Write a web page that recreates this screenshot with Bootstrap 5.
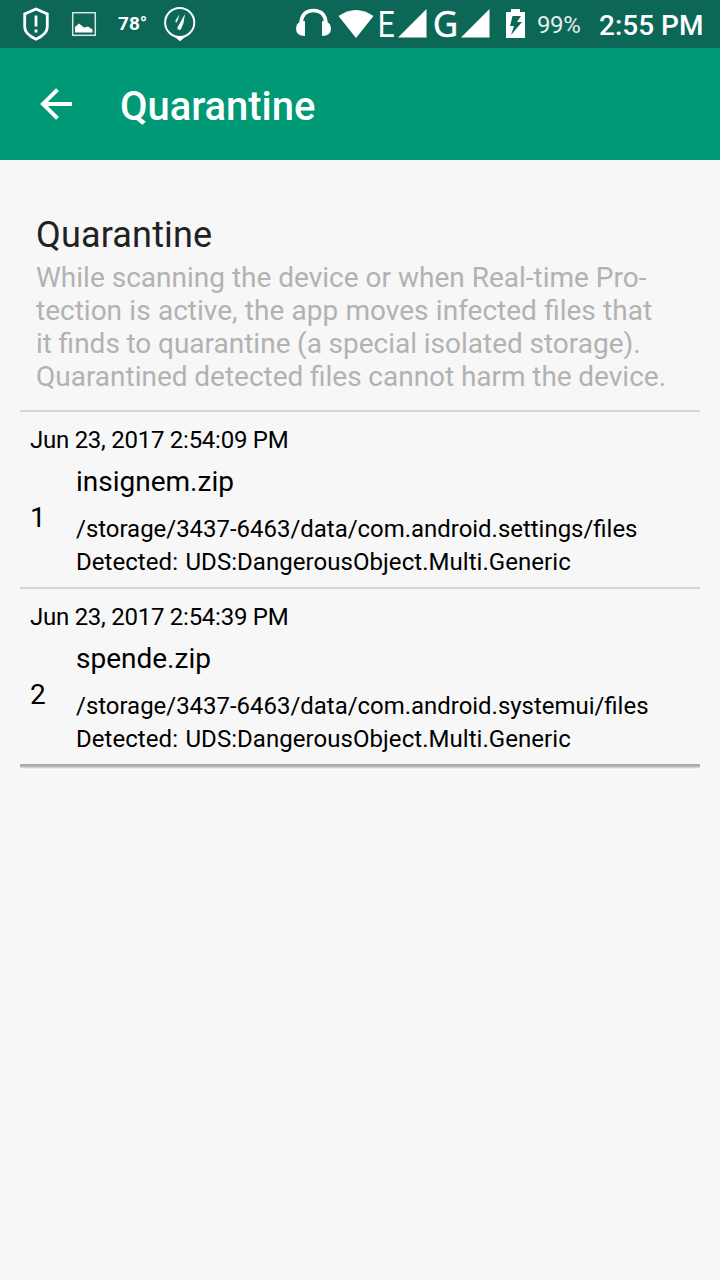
<!DOCTYPE html>
<html lang="en">
<head>
<meta charset="utf-8">
<meta name="viewport" content="width=device-width, initial-scale=1">
<title>Quarantine</title>
<link href="https://cdn.jsdelivr.net/npm/bootstrap@5.3.0/dist/css/bootstrap.min.css" rel="stylesheet">
<style>
body{background:#f7f7f7;font-family:Roboto,"Liberation Sans",sans-serif;color:#000;min-height:1280px}
.statusbar{height:48px;background:#0c6757}
.statusbar svg{display:block;flex:none;overflow:visible}
.statusbar span{flex:none;white-space:nowrap}
.temp{font-size:19px;font-weight:700;line-height:48px;width:29px;margin:0 16px 0 21px}
.pct{font-size:24px;line-height:48px;width:44px;margin:1px 0 0 11px;letter-spacing:-.4px;color:#e3eeeb}
.clock{font-size:28px;font-weight:500;line-height:48px;width:105px;margin:2px 16px 0 18px}
.appbar{height:112px;background:#009975;padding-left:40px}
.appbar h1{font-size:40px;font-weight:500;line-height:48px;margin:6px 0 0 48px;letter-spacing:-.05px}
.intro{padding:54px 36px 17px}
.intro h2{font-size:36px;line-height:42px;font-weight:400;color:#212121;margin:0 0 5px;letter-spacing:.17px}
.intro p{font-size:28px;line-height:33px;color:#b2b2b2;margin:0;white-space:nowrap}
.wide-gap{word-spacing:.36px}
.tight-gap{word-spacing:-.3px}
.entries{margin:0 20px}
.entry{border-top:2px solid #d6d8d7;height:177px;padding:14px 10px 0}
.entry time{display:block;font-size:24px;line-height:28px;letter-spacing:-.26px}
.num{font-size:28px;line-height:33px;width:46px;padding-top:47px;flex:none}
.fname{font-size:28px;line-height:33px;margin:11px 0 15px}
.detail{font-size:24px;line-height:33px;white-space:nowrap}
.path{font-size:23.94px}
.threat{letter-spacing:.05px;word-spacing:1.5px}
.edge{height:6px;background:linear-gradient(#a9abaa 0 2px,#bdbdbd 2px 3px,#d2d2d2 3px 4px,#ececec 4px 5px,#fcfcfc 5px)}
</style>
</head>
<body>
<header class="text-white">
  <div class="statusbar d-flex justify-content-between">
    <div class="d-flex">
      <svg width="97" height="48" viewBox="0 0 97 48" fill="none" stroke="#fff">
        <path d="M36 9l11.3 5v13q0 7-11.3 12.3Q24.700 34 24.700 27V14z" stroke-width="2.8"/>
        <path d="M36 15.500v11M36 29.500v3" stroke-width="2.800"/>
        <rect x="72.700" y="12.700" width="22.600" height="22.600" stroke="#d9e7e4" stroke-width="1.500"/>
        <path d="M75 32.500v-5.500l4-3.500 5 4 4-1 4.500 3v3z" fill="#fff" stroke="none"/>
      </svg>
      <span class="temp">78°</span>
      <svg width="34" height="48" viewBox="163 0 34 48">
        <circle cx="179.700" cy="22.500" r="14.600" fill="none" stroke="#fff" stroke-width="2"/>
        <path d="M173 35.500q7 3 14 0l-7 5.700z" fill="#fff"/>
        <path d="M185 14l-1.500 9-2.500 6q-1.500 2-3.500 0-.5-2 1-3.500zM179.300 14.500l-1.300 5-1.500 3q-1.500 0-1-2z" fill="#fff"/>
      </svg>
    </div>
    <div class="d-flex">
      <svg width="232" height="48" viewBox="294 0 232 48" fill="#fff">
        <path d="M301 23q1-12.500 12.500-12.500T326 23" fill="none" stroke="#fff" stroke-width="3.500"/>
        <path d="M305 21v15q-9 0-9-7.500t9-7.500zM322 21v15q9 0 9-7.500t-9-7.500z"/>
        <path d="M338.500 16Q356 4 373.500 16L356 38z"/>
        <text x="377.700" y="37" font-family="Roboto, sans-serif" font-size="37.500" textLength="17" lengthAdjust="spacingAndGlyphs">E</text>
        <path d="M398 37.500L426.500 9v28.500z"/>
        <text x="432.700" y="36.500" font-family="Noto Sans, sans-serif" font-size="36" textLength="25.500" lengthAdjust="spacingAndGlyphs" stroke="#fff" stroke-width=".4">G</text>
        <path d="M461 37.500L489.500 9v28.500z"/>
        <path fill-rule="evenodd" d="M506 12h5V9h9v3h5v26h-19zM512.500 16l-2.500 10h4l-3 9 11-13h-5l4-6z"/>
      </svg>
      <span class="pct">99%</span>
      <span class="clock">2:55 PM</span>
    </div>
  </div>
  <nav class="appbar d-flex align-items-center" aria-label="Main">
    <svg width="32" height="32" viewBox="0 0 32 32" fill="none" stroke="#fff" stroke-width="4" aria-label="Back"><path d="M32 16H3M17.500 1.700L3 16l14.500 14.300"/></svg>
    <h1>Quarantine</h1>
  </nav>
</header>
<main>
  <section class="intro">
    <h2>Quarantine</h2>
    <p>While scanning the device or when Real-time Pro-<br><span class="wide-gap">tection is active, the app moves infected files that</span><br><span class="tight-gap">it finds to quarantine (a special isolated storage).</span><br><span class="tight-gap">Quarantined detected files cannot harm the device.</span></p>
  </section>
  <section class="entries">
    <article class="entry">
      <time>Jun 23, 2017 2:54:09 PM</time>
      <div class="d-flex">
        <div class="num">1</div>
        <div><div class="fname">insignem.zip</div><div class="detail path">/storage/3437-6463/data/com.android.settings/files</div><div class="detail threat">Detected: UDS:DangerousObject.Multi.Generic</div></div>
      </div>
    </article>
    <article class="entry">
      <time>Jun 23, 2017 2:54:39 PM</time>
      <div class="d-flex">
        <div class="num">2</div>
        <div><div class="fname">spende.zip</div><div class="detail path">/storage/3437-6463/data/com.android.systemui/files</div><div class="detail threat">Detected: UDS:DangerousObject.Multi.Generic</div></div>
      </div>
    </article>
    <div class="edge"></div>
  </section>
</main>
<script src="https://cdn.jsdelivr.net/npm/bootstrap@5.3.0/dist/js/bootstrap.bundle.min.js"></script>
</body>
</html>
